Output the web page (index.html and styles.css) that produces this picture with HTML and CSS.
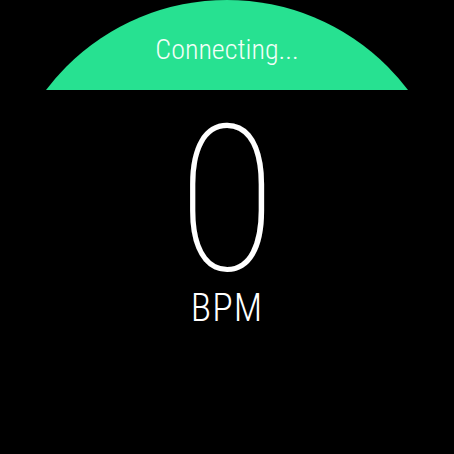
FILE: index.html
```html
<!DOCTYPE html>
<html>
<head>
<meta charset="utf-8">
<link rel="stylesheet" href="styles.css">
</head>
<body>
<div class="screen">
  <div class="header">
    <div class="cap"></div>
    <div class="status">Connecting...</div>
  </div>
  <div class="reading">
    <div class="value">0</div>
    <div class="unit">BPM</div>
  </div>
</div>
</body>
</html>
```

FILE: styles.css
```css
html, body {
  margin: 0;
  padding: 0;
  background: #000;
}
.screen {
  width: 454px;
  height: 454px;
  background: #000;
  color: #fff;
  font-family: Roboto, "Noto Sans", sans-serif;
  font-stretch: 87.5%;
  display: flex;
  flex-direction: column;
  align-items: center;
  overflow: hidden;
}
.header {
  position: relative;
  width: 454px;
  height: 90px;
  overflow: hidden;
  display: flex;
  align-items: center;
  justify-content: center;
}
.cap {
  position: absolute;
  left: 0;
  top: 0;
  width: 454px;
  height: 454px;
  border-radius: 50%;
  background: #27e191;
}
.status {
  position: relative;
  font-size: 28px;
  font-weight: 300;
  color: #f2fff8;
  margin-top: 9px;
}
.reading {
  display: flex;
  flex-direction: column;
  align-items: center;
  padding-top: 26px;
}
.value {
  font-size: 204px;
  font-weight: 150;
  line-height: 170px;
}
.unit {
  font-size: 38px;
  font-weight: 300;
  letter-spacing: 1px;
  line-height: 34px;
  margin-top: 5px;
}
```
